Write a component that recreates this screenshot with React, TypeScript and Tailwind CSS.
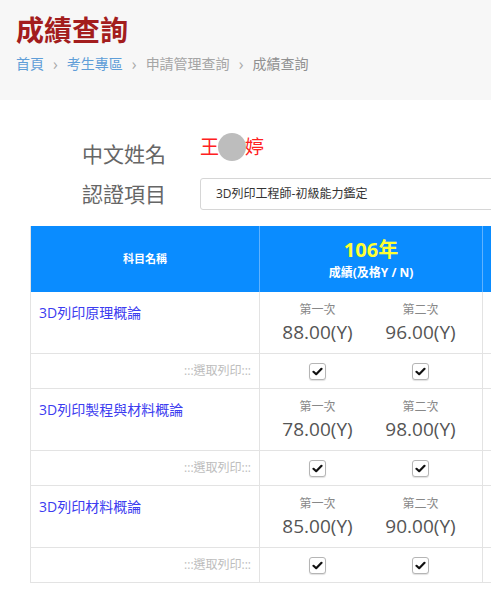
import React from 'react';

type Subject = {
  name: string;
  first: string;
  second: string;
};

const subjects: Subject[] = [
  { name: '3D列印原理概論', first: '88.00(Y)', second: '96.00(Y)' },
  { name: '3D列印製程與材料概論', first: '78.00(Y)', second: '98.00(Y)' },
  { name: '3D列印材料概論', first: '85.00(Y)', second: '90.00(Y)' },
];

function CheckBox() {
  return (
    <span className="flex h-[17px] w-[17px] items-center justify-center rounded-[3px] border border-[#b5b5b5] bg-white shadow-[0_1px_1px_rgba(0,0,0,0.12)]">
      <svg width="11" height="9" viewBox="0 0 11 9">
        <path d="M1.5 4.8 L4.2 7.2 L9.5 1.8" fill="none" stroke="#111" strokeWidth="2.2" strokeLinecap="round" strokeLinejoin="round" />
      </svg>
    </span>
  );
}

function ScoreRow({ subject }: { subject: Subject }) {
  return (
    <>
      <div className="flex h-[62px] border-b border-[#e3e3e3]">
        <div className="w-[229px] border-r border-[#e3e3e3] pl-[8px] pt-[12px] text-[14px] leading-[18px] text-[#3c3cf0]">
          {subject.name}
        </div>
        <div className="flex w-[223px] border-r border-[#e3e3e3] pl-[6px]">
          {[subject.first, subject.second].map((s, i) => (
            <div key={i} className="flex w-[103px] flex-col items-center pt-[10px]">
              <span className="text-[12px] leading-[15px] text-[#888]">{i === 0 ? '第一次' : '第二次'}</span>
              <span className="mt-[3px] text-[19px] leading-[24px] text-[#555]">{s}</span>
            </div>
          ))}
        </div>
        <div className="flex-1" />
      </div>
      <div className="flex h-[35px] border-b border-[#e3e3e3]">
        <div className="flex w-[229px] items-center justify-end border-r border-[#e3e3e3] pr-[8px] text-[12px] text-[#bdbdbd]">
          :::選取列印:::
        </div>
        <div className="flex w-[223px] items-center border-r border-[#e3e3e3] pl-[6px]">
          <div className="flex w-[103px] justify-center">
            <CheckBox />
          </div>
          <div className="flex w-[103px] justify-center">
            <CheckBox />
          </div>
        </div>
        <div className="flex-1" />
      </div>
    </>
  );
}

function Sep() {
  return <span className="mx-[9px] text-[16px] leading-[16px] text-[#aaa]">›</span>;
}

export default function App() {
  return (
    <div className="h-[600px] w-[491px] overflow-hidden bg-white font-['Open_Sans','Noto_Sans_CJK_TC',sans-serif]">
      <div className="h-[100px] bg-[#f7f7f7] pl-[16px] pt-[13px]">
        <h1 className="text-[28px] font-semibold leading-[34px] text-[#a31d1d]">成績查詢</h1>
        <div className="mt-[8px] flex items-center text-[14px] leading-[17px]">
          <span className="text-[#5f9ed8]">首頁</span>
          <Sep />
          <span className="text-[#5f9ed8]">考生專區</span>
          <Sep />
          <span className="text-[#a5a5a5]">申請管理查詢</span>
          <Sep />
          <span className="text-[#909090]">成績查詢</span>
        </div>
      </div>

      <div className="pt-[34px]">
        <div className="flex h-[40px] items-center">
          <span className="w-[118px] pl-[82px] text-[21px] leading-[26px] text-[#666] whitespace-nowrap">中文姓名</span>
          <div className="ml-[82px] flex -translate-y-[7px] items-center text-[19px] leading-[24px] text-[#ff2020]">
            <span>王</span>
            <span className="mx-[-1px] h-[28px] w-[28px] rounded-full bg-[#bdbdbd]" />
            <span>婷</span>
          </div>
        </div>
        <div className="flex h-[40px] items-center">
          <span className="w-[200px] shrink-0 pl-[82px] text-[21px] leading-[26px] text-[#666]">認證項目</span>
          <div className="flex h-[32px] w-[320px] shrink-0 items-center rounded-[3px] border border-[#d6d6d6] pl-[15px] text-[12px] text-[#333]">
            3D列印工程師-初級能力鑑定
          </div>
        </div>

        <div className="ml-[30px] mt-[12px] w-[520px] border-l border-[#e3e3e3]">
          <div className="flex h-[66px] bg-[#0a8cff] text-white">
            <div className="flex w-[229px] items-center justify-center border-r border-[#5fb2ff] text-[11px] font-bold">
              科目名稱
            </div>
            <div className="flex w-[223px] flex-col items-center justify-center border-r border-[#5fb2ff]">
              <span className="text-[20px] font-bold leading-[24px] text-[#ffff33]">106年</span>
              <span className="mt-[3px] text-[12px] font-bold leading-[16px]">成績(及格Y / N)</span>
            </div>
            <div className="flex-1" />
          </div>
          {subjects.map((s) => (
            <ScoreRow key={s.name} subject={s} />
          ))}
        </div>
      </div>
    </div>
  );
}
